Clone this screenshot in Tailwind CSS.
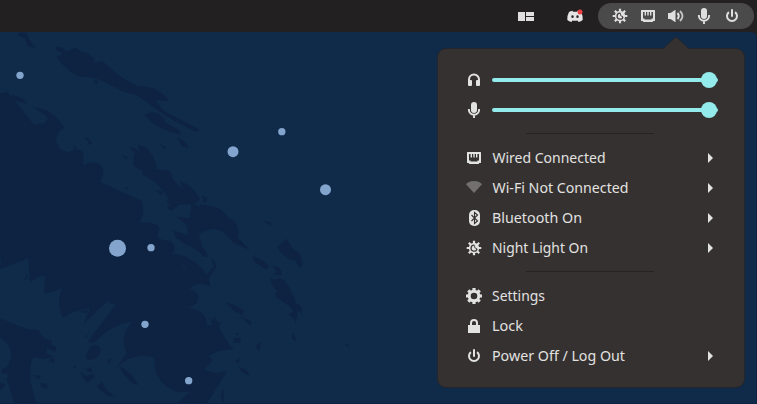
<!DOCTYPE html>
<html lang="en">
<head>
<meta charset="utf-8">
<title>System menu</title>
<script src="https://cdn.jsdelivr.net/npm/@tailwindcss/browser@4"></script>
</head>
<body class="relative flex h-[404px] w-[757px] flex-col overflow-hidden bg-[#102a4a] font-['Noto_Sans','Open_Sans',sans-serif]">
<svg class="absolute" width="0" height="0" aria-hidden="true">
  <symbol id="night" viewBox="0 0 16 16">
    <path d="M8 .7v3M8 12.300v3M.7 8h3M12.300 8h3M2.800 2.800l2.500 2.500M10.700 10.700l2.500 2.500M2.800 13.200l2.500-2.500M10.700 5.300l2.500-2.500" stroke="currentColor" stroke-width="2.200"/>
    <circle cx="8" cy="8" r="5.200" fill="currentColor"/>
    <path d="M8.300 5.200A3 3 0 1 0 11 8.800" fill="none" stroke="#403c3b" stroke-width="1.300"/>
    <path d="M8.300 5.200Q8 8.600 11 8.800" fill="none" stroke="#403c3b" stroke-width=".9"/>
  </symbol>
  <symbol id="wired" viewBox="0 0 16 16">
    <path fill="currentColor" fill-rule="evenodd" d="M1.500 2h13q.5 0 .5.5v10q0 .5-.5.500H13v.5q0 .5-.5.500h-9q-.5 0-.5-.5V13H1.500q-.5 0-.5-.5v-10q0-.5.500-.5ZM3 4v6.500h1.500v1h7v-1H13V4h-1.600v3.500H10V4H8.700v3.500H7.300V4H6v3.500H4.600V4Z"/>
  </symbol>
  <symbol id="mic" viewBox="0 0 16 16">
    <rect x="5" y="0" width="6" height="11" rx="3" fill="currentColor"/>
    <path d="M2.900 7v1a5.100 4.800 0 0 0 10.200 0V7M8 12.500V16" fill="none" stroke="currentColor" stroke-width="1.900"/>
  </symbol>
  <symbol id="power" viewBox="0 0 16 16">
    <path d="M4.900 4.100a5 5 0 1 0 6.200 0" fill="none" stroke="currentColor" stroke-width="2"/>
    <path d="M8 2v6" stroke="currentColor" stroke-width="2" stroke-linecap="round"/>
  </symbol>
</svg>

<!-- Wallpaper -->
<svg class="absolute inset-0" width="757" height="404" viewBox="0 0 757 404" aria-hidden="true">
  <g transform="translate(0 20) scale(.33333)" fill="#0d2341">
    <path d="M0 220L20 217 12 205 35 232 103 315 120 309 133 311 143 295 125 278 98 262Q160 265 193 325Q170 335 168 360Q175 395 205 397L222 390V370L228 388 245 393 250 400V437Q275 418 300 433Q320 455 300 487L420 540Q435 555 427 590L418 607 455 609Q475 615 480 627C465 645 472 657 495 661C525 660 530 690 515 702C570 700 625 750 632 800Q595 780 568 807C600 812 610 850 563 863Q620 870 620 914L650 917 645 887Q670 960 702 988L660 992 625 1007 638 1020 612 1049 650 1060 682 1052 620 1152H0Z"/>
    <path fill="#102a4a" d="M0 700L3 730 0 747 85 715 90 792Q105 768 135 767L133 823 187 804Q165 850 190 895Q220 870 272 863L250 912 325 841 332 851 350 850 262 967 285 967Q330 915 400 904Q370 930 370 970L380 1000 350 1042Q400 995 463 1012Q460 1090 530 1115Q550 1118 573 1114L528 1152H110L100 1118 90 1080 93 1030 100 1012 135 1017 160 1010 138 1000 140 985 165 995 170 982 155 975 154 960 135 958 115 930 80 927 0 895Z"/>
    <path fill="#102a4a" d="M0 952Q30 970 35 1005L25 1035 5 1050 8 1062 25 1060 20 1080 45 1152H0Z"/>
    <path d="M270 980Q290 967 302 985Q300 1020 265 1020L256 1010ZM358 1038Q400 1060 415 1095Q380 1088 358 1038ZM290 1100L305 1086 322 1112 350 1133 320 1125ZM238 1055L260 1068 280 1062 285 1070 260 1088ZM240 1040L258 1048 275 1040V1058L260 1050ZM218 1038L230 1040 225 1048ZM95 1065L122 1068 118 1077ZM118 1090L140 1092 142 1106 128 1104ZM145 1020L165 1013 162 1030ZM68 785L82 763 84 772ZM240 875L264 870 258 880ZM254 948L263 945 262 952ZM322 1020L334 1015 328 1034ZM0 1088L15 1092 10 1105 0 1110Z"/>
    <path d="M35 225Q68 230 83 252L40 240ZM55 38L78 38 93 68 108 83 82 78 75 55 55 47Z"/>
    <path d="M165 83Q178 74 200 95L228 82 240 94Q270 100 285 120L280 130 307 122Q365 180 415 199C460 195 500 225 506 243L467 240 490 272 600 329 588 335Q490 290 410 224C350 220 310 165 240 171Q200 155 171 112L190 100 168 91Z"/>
    <path d="M435 285Q450 268 480 285L498 300 490 304 535 330 543 345 510 335Q455 315 435 285ZM530 352L555 365 565 383 545 378ZM478 372L500 382 493 388ZM278 183L294 180 290 193ZM250 353Q270 353 276 370L262 376 267 366ZM362 404L384 411 378 419ZM464 511L490 515 484 524ZM376 505L388 498 380 510ZM387 380L405 386 420 395 412 375Q450 375 470 438L465 447 510 453 520 480 550 510 540 483Q580 495 600 540L585 547 622 562 640 560Q680 570 690 615L715 655 750 690 700 670Q660 610 620 632L605 618 612 635 597 630Q595 655 617 700L625 710 612 708 575 680 560 675 528 654 517 629 560 645Q575 620 530 592L575 595 573 552 537 554 515 573 500 565 510 555 500 545 505 535Q480 490 430 465L425 450 402 438 400 410 405 398ZM605 525L622 535 617 548 602 550 610 540ZM530 590L568 597 578 550 610 560 640 585 695 610 680 623 630 625 600 640 550 605Z"/>
    <path fill="#102a4a" d="M583 550L612 545 625 570 605 568ZM548 732L560 745 549 743ZM574 771L590 770 580 775Z"/>
    <path d="M600 552L655 565Q678 580 690 600L712 638 715 655 735 680 708 660 680 620 640 628 600 610ZM690 595Q710 600 718 645L700 635ZM790 602L812 607 814 617ZM858 656Q868 665 876 685L900 702 908 735 898 744 886 722 870 718Q838 700 832 680L846 670ZM757 708L790 723 808 740 798 747 762 725ZM818 740Q835 730 846 760L840 767 820 762 832 756ZM811 770L820 780Q840 772 852 780Q873 805 889 850L903 860 907 885 893 870 888 911 882 895 866 885 880 873 870 860 828 830 824 820 833 816 814 790ZM677 845L710 858 732 872 726 884 704 875ZM720 888L755 905 752 918ZM700 955L720 953 723 967 702 968ZM705 940L717 940 712 947ZM770 975L783 965 777 995 769 983ZM880 938L890 965 874 954ZM1032 970L1045 973 1047 983ZM705 1022L720 1015 716 1030ZM715 1042Q745 1045 748 1067L725 1055ZM662 1130L670 1105 672 1150ZM627 890L638 903 642 890 650 912 668 905 655 918 645 935Z"/>
    <path d="M600 750L632 800 625 780 648 740Q645 715 633 718L643 738 618 765ZM600 682L620 695 620 708 608 710Z"/>
    <g fill="#83a5cd"><circle cx="60" cy="166" r="11"/><circle cx="699" cy="395" r="16.500"/><circle cx="845.500" cy="335" r="11"/><circle cx="976.500" cy="509" r="16.500"/><circle cx="352.500" cy="685" r="25.500"/><circle cx="453" cy="683" r="11"/><circle cx="435" cy="913" r="11"/><circle cx="566" cy="1082" r="11"/></g>
  </g>
  <path d="M756.500 36v368M0 403.500h757" stroke="#0d2341"/>
  <path d="M751 32h6v6q0-6-6-6Z" fill="#222020"/>
</svg>

<header class="relative flex h-8 shrink-0 items-center justify-end bg-[#222020] pr-[3px] text-[#dfdfdf]">
  <svg class="mr-[33px]" width="16" height="16" viewBox="0 0 16 16" fill="currentColor"><path d="M0 4h7v9H0zM8 4h8v4H8zM8 9h8v4H8z"/></svg>
  <svg class="mr-[15px]" width="16" height="16" viewBox="0 0 16 16"><path fill="#e5e5e5" fill-rule="evenodd" d="M5.500 2.800Q3.500 3 2 4Q0 7.500.3 12Q2 13.500 4.500 14l1-1.500q2.500.6 5 0l1 1.500q2.500-.5 4.200-2Q16 7.500 14 4q-1.500-1-3.500-1.200L10 3.700H6ZM5.500 7.300a1.200 1.400 0 1 0 0 2.800A1.200 1.400 0 0 0 5.500 7.300ZM10.500 7.300a1.200 1.400 0 1 0 0 2.800A1.200 1.400 0 0 0 10.500 7.300Z"/><circle cx="13" cy="4" r="2.500" fill="#ed4245"/></svg>
  <div class="flex h-[26px] w-[156px] items-center justify-center gap-3 rounded-full bg-[#4b4a4a]">
    <svg width="16" height="16"><use href="#night"/></svg>
    <svg width="16" height="16"><use href="#wired"/></svg>
    <svg width="16" height="16" viewBox="0 0 16 16"><path fill="currentColor" d="M0 5h2.500L7 2h.5v12H7l-4.500-3H0Z"/><path d="M9.500 5q2.500 3 0 6" fill="none" stroke="currentColor" stroke-width="2"/><path d="M12 3q5 5 0 10" fill="none" stroke="#c5c5c5" stroke-width="1.800"/></svg>
    <svg width="16" height="16"><use href="#mic"/></svg>
    <svg width="16" height="16"><use href="#power"/></svg>
  </div>
</header>

<main class="relative mt-[17px] ml-[438px] h-[338px] w-[306px] rounded-[8px] bg-[#353130] py-4 pr-[26px] pl-7 text-[15px] text-[#e2e2e1] shadow-[0_0_0_1px_#24262c]">
  <svg class="absolute -top-3 left-[225px]" width="26" height="13" viewBox="0 0 26 13"><path d="M0 12L12 .8q1-1 2 0L26 12v1H0Z" fill="#353130"/><path d="M0 11.500L12 .5q1-.8 2 0l12 11" fill="none" stroke="#24262c" stroke-width=".8"/></svg>
  <div class="flex h-[30px] items-center gap-[10px]">
    <svg width="16" height="16" viewBox="0 0 16 16"><path d="M3 11V7.500a5 5 0 0 1 10 0V11" fill="none" stroke="currentColor" stroke-width="2"/><path fill="currentColor" d="M2 8h3q1 0 1 1v4q0 1-1 1H3q-1 0-1-1ZM14 8h-3q-1 0-1 1v4q0 1 1 1h2q1 0 1-1Z"/></svg>
    <div class="flex h-1 w-[226px] items-center justify-end rounded-full bg-[#94ebeb] pr-px"><span class="h-4 w-4 rounded-full bg-[#94ebeb]"></span></div>
  </div>
  <div class="flex h-[30px] items-center gap-[10px]">
    <svg width="16" height="16"><use href="#mic"/></svg>
    <div class="flex h-1 w-[226px] items-center justify-end rounded-full bg-[#94ebeb] pr-px"><span class="h-4 w-4 rounded-full bg-[#94ebeb]"></span></div>
  </div>
  <div class="flex h-[18px] pt-2 pl-[60px]"><span class="h-px w-32 bg-[#262322]"></span></div>

  <div class="flex h-[30px] items-center gap-[10px]">
    <svg width="16" height="16"><use href="#wired"/></svg>
    <svg class="w-[206px]" height="22" fill="currentColor"><text x=".5" y="16" textLength="113" lengthAdjust="spacingAndGlyphs">Wired Connected</text></svg>
    <svg width="5" height="10"><path d="M0 0l5 5-5 5Z" fill="currentColor"/></svg>
  </div>
  <div class="flex h-[30px] items-center gap-[10px]">
    <svg width="16" height="16" viewBox="0 0 16 16"><path d="M0 4.200Q3 1 8 1t8 3.200L8 13Z" fill="#72706f"/></svg>
    <svg class="w-[206px]" height="22" fill="currentColor"><text x=".5" y="16" textLength="136" lengthAdjust="spacingAndGlyphs">Wi-Fi Not Connected</text></svg>
    <svg width="5" height="10"><path d="M0 0l5 5-5 5Z" fill="currentColor"/></svg>
  </div>
  <div class="flex h-[30px] items-center gap-[10px]">
    <svg width="16" height="16" viewBox="0 0 16 16"><rect x="3" width="11" height="16" rx="5" fill="currentColor"/><path d="M5.500 5l6 6L8.500 13.500v-11L11.500 5l-6 6" fill="none" stroke="#353130" stroke-width="1.100"/></svg>
    <svg class="w-[206px]" height="22" fill="currentColor"><text x="0" y="16" textLength="90" lengthAdjust="spacingAndGlyphs">Bluetooth On</text></svg>
    <svg width="5" height="10"><path d="M0 0l5 5-5 5Z" fill="currentColor"/></svg>
  </div>
  <div class="flex h-[30px] items-center gap-[10px]">
    <svg width="16" height="16"><use href="#night"/></svg>
    <svg class="w-[206px]" height="22" fill="currentColor"><text x="0" y="16" textLength="96" lengthAdjust="spacingAndGlyphs">Night Light On</text></svg>
    <svg width="5" height="10"><path d="M0 0l5 5-5 5Z" fill="currentColor"/></svg>
  </div>
  <div class="flex h-[18px] pt-2 pl-[60px]"><span class="h-px w-32 bg-[#262322]"></span></div>

  <div class="flex h-[30px] items-center gap-[10px]">
    <svg width="16" height="16" viewBox="0 0 16 16"><circle cx="8" cy="8" r="4.800" fill="none" stroke="currentColor" stroke-width="3"/><path d="M8 0v3M8 13v3M0 8h3M13 8h3M2.300 2.300l2 2M11.700 11.700l2 2M2.300 13.700l2-2M11.700 4.300l2-2" stroke="currentColor" stroke-width="3.200"/></svg>
    <svg class="w-[206px]" height="22" fill="currentColor"><text x="0" y="16" textLength="53" lengthAdjust="spacingAndGlyphs">Settings</text></svg>
  </div>
  <div class="flex h-[30px] items-center gap-[10px]">
    <svg width="16" height="16" viewBox="0 0 16 16"><path d="M2 7h12v8H2Z" fill="currentColor"/><path d="M5 8V5a3 3 0 0 1 6 0v3" fill="none" stroke="currentColor" stroke-width="2"/></svg>
    <svg class="w-[206px]" height="22" fill="currentColor"><text x="0" y="16" textLength="31" lengthAdjust="spacingAndGlyphs">Lock</text></svg>
  </div>
  <div class="flex h-[30px] items-center gap-[10px]">
    <svg width="16" height="16"><use href="#power"/></svg>
    <svg class="w-[206px]" height="22" fill="currentColor"><text x="0" y="16" textLength="133" lengthAdjust="spacingAndGlyphs">Power Off / Log Out</text></svg>
    <svg width="5" height="10"><path d="M0 0l5 5-5 5Z" fill="currentColor"/></svg>
  </div>
</main>
</body>
</html>
